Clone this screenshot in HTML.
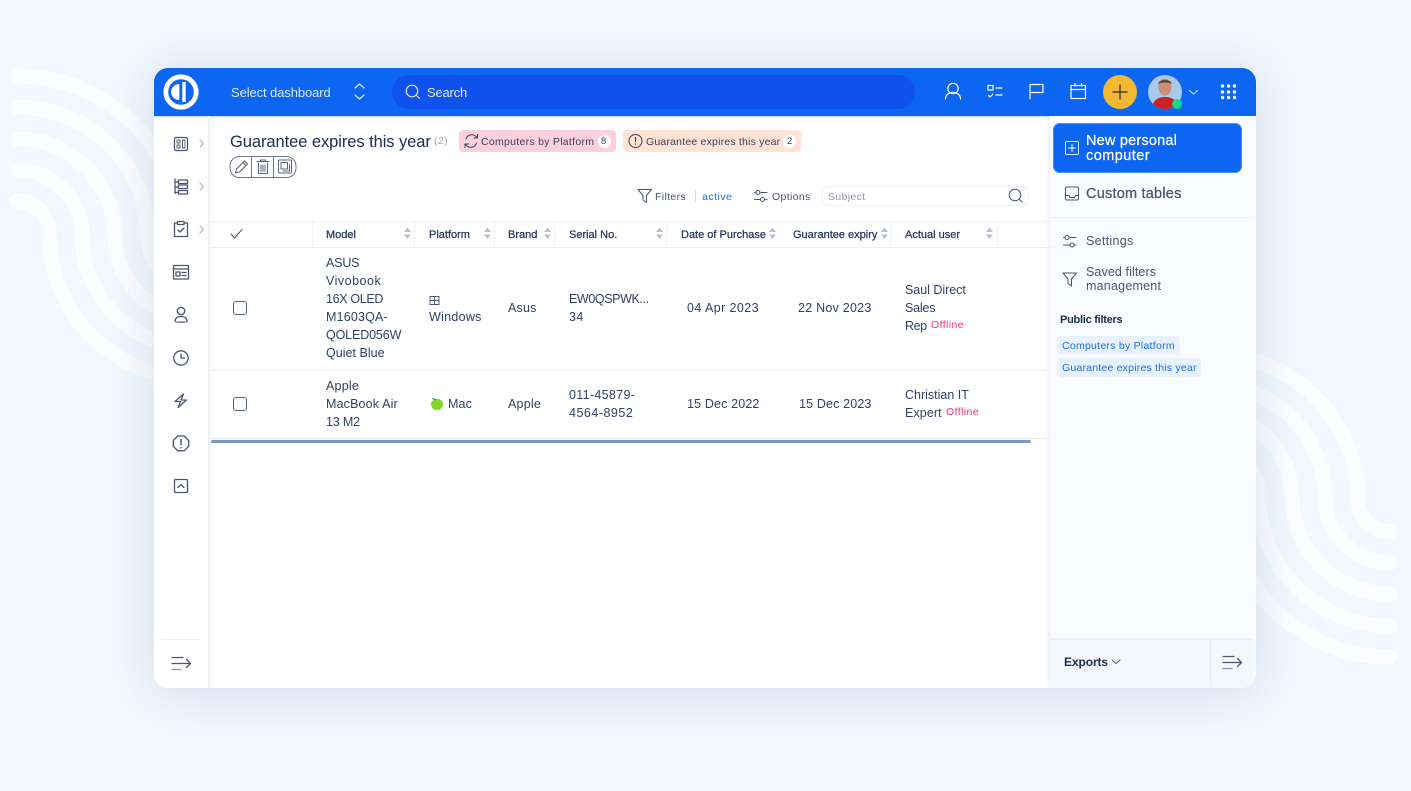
<!DOCTYPE html>
<html><head><meta charset="utf-8"><title>Guarantee expires this year</title>
<style>
html,body{margin:0;padding:0}
body{width:1411px;height:791px;overflow:hidden;position:relative;background:#f3f8fe;font-family:"Liberation Sans",sans-serif;color:#24365c}
svg{position:absolute;left:0;top:0}
.card{position:absolute;left:154px;top:68px;width:1102px;height:620px;background:#fff;border-radius:14px;box-shadow:0 4px 50px rgba(60,90,140,.18);overflow:hidden}
.head{position:absolute;left:0;top:0;width:1102px;height:48px;background:#0d66f1;box-shadow:0 1px 2px rgba(30,60,120,.25)}
.search{position:absolute;left:238px;top:7px;width:523px;height:34px;border-radius:17px;background:#1052ee}
.vline{position:absolute;left:54px;top:48px;width:2px;height:572px;background:#eef1f7;box-shadow:2px 0 5px rgba(60,80,120,.06)}
.rside{position:absolute;left:896px;top:48px;width:206px;height:572px;background:#fafbff;box-shadow:-1px 0 4px rgba(60,80,120,.12)}
.foot{position:absolute;left:896px;top:570px;width:203px;height:48px;background:#f4f8fe;border-top:2px solid #eef1f8;border-bottom:1px solid #e8ecf4}
.t{position:absolute;white-space:nowrap;line-height:18px;transform:translateY(-8px);font-size:12.5px;letter-spacing:.2px;color:#2a3c63;z-index:5}
.r{margin-top:-1px;color:#2f4166}
.h{font-size:11px;letter-spacing:0;color:#24365c;-webkit-text-stroke:.25px #24365c}
.s{font-size:12.5px;color:#4b5472;margin-top:-1px}
.tag{font-size:10.5px;color:#3a3f5c}
.box{position:absolute;z-index:2}
.off{font-size:10.5px;letter-spacing:.4px;color:#f5307a}
</style></head>
<body>
<svg width="1411" height="791" fill="none" stroke="#fff" stroke-opacity=".7" stroke-width="15" stroke-linecap="round">
<g>
<path d="M17 201A32 32 0 0 1 49 233A146 146 0 0 0 195 379"/>
<path d="M17 170A65 65 0 0 1 82 235A113 113 0 0 0 195 348"/>
<path d="M17 139A98 98 0 0 1 115 237A80 80 0 0 0 195 317"/>
<path d="M17 107A131 130 0 0 1 148 237A47 47 0 0 0 195 284"/>
<path d="M17 76A164 161 0 0 1 181 237"/>
</g>
<g>
<path d="M1390 532A32 32 0 0 1 1358 500A146 146 0 0 0 1212 354"/>
<path d="M1390 563A65 65 0 0 1 1325 498A113 113 0 0 0 1212 385"/>
<path d="M1390 594A98 98 0 0 1 1292 496A80 80 0 0 0 1212 416"/>
<path d="M1390 626A131 130 0 0 1 1259 496A47 47 0 0 0 1212 449"/>
<path d="M1390 657A164 161 0 0 1 1226 496"/>
</g>
</svg>

<div class="card">
  <div class="box" style="left:56px;top:153px;width:843px;height:1px;background:#eef1f8"></div>
  <div class="box" style="left:56px;top:179px;width:843px;height:1px;background:#eef1f8"></div>
  <div class="box" style="left:56px;top:301px;width:839px;height:2px;background:#f3f5fa"></div>
  <div class="box" style="left:56px;top:370px;width:839px;height:1px;background:#e6ebf3"></div>
  <div class="box" style="left:57px;top:372px;width:820px;height:3px;background:#7d99c2;border-radius:2px"></div>
  <div class="head"></div>
  <div class="search"></div>
  <div class="vline"></div>
  <div class="rside"></div>
  <div class="foot"></div>
  <div class="box" style="left:668px;top:118px;width:207px;height:20px;border:1px solid #eef2fb;border-radius:6px;box-sizing:border-box;background:#fff"></div>
  <div class="box" style="left:305px;top:62px;width:157px;height:22px;background:#ffcfdc;border-radius:4px"></div>
  <div class="box" style="left:469px;top:62px;width:178px;height:22px;background:#ffe4d6;border-radius:4px"></div>
  <div class="box" style="left:444px;top:67px;width:13px;height:13px;background:#fff;border-radius:50%"></div>
  <div class="box" style="left:629px;top:67px;width:13px;height:13px;background:#fff;border-radius:50%"></div>
  <div class="box" style="left:899px;top:55px;width:189px;height:50px;background:#0d66f1;border-radius:7px;box-shadow:0 0 0 1px #4d8ff5 inset"></div>
  <div class="box" style="left:896px;top:149px;width:203px;height:1px;background:#eef1f7"></div>
  <div class="box" style="left:903px;top:268px;width:123px;height:18px;background:#e8f2fe;border-radius:4px"></div>
  <div class="box" style="left:903px;top:290px;width:144px;height:19px;background:#e8f2fe;border-radius:4px"></div>
  <div class="box" style="left:7px;top:571px;width:40px;height:1px;background:#eef0f5"></div>
  <div class="box" style="left:1056px;top:572px;width:1px;height:46px;background:#e9edf5"></div>
</div>

<svg width="1411" height="791" fill="none" stroke="#4b5472" stroke-width="1.2" stroke-linecap="round" stroke-linejoin="round" style="z-index:4">
<!-- logo -->
<circle cx="181" cy="92" r="15.200" stroke="#fff" stroke-width="4.800"/>
<path d="M179 84.500a7.500 7.500 0 0 0 0 15z" fill="#fff" stroke="#fff" stroke-width=".8"/>
<path d="M184 82v20" stroke="#fff" stroke-width="3.400" stroke-linecap="butt"/>
<!-- dashboard chevrons -->
<path d="M355 88l4.500-4 4.500 4M355 95l4.500 4 4.500-4" stroke="#dbe8ff"/>
<!-- search icon -->
<circle cx="412" cy="91" r="5.800" stroke="#dbe8ff"/><path d="M416.500 95.500l3 3" stroke="#dbe8ff"/>
<!-- header right icons -->
<g stroke="#fff" stroke-width="1.200">
<circle cx="953" cy="88.500" r="5.200"/><path d="M945.500 99c0-4 3-6.500 7.500-6.500s7.500 2.500 7.500 6.500"/>
<rect x="988" y="85.500" width="5" height="4.500" stroke-linejoin="miter"/><path d="M996 88h6M996 95h6M988.500 95.500l1.500 1.500 3-3"/>
<path d="M1030 99V84.500h13v8h-13" stroke-linejoin="miter"/>
<rect x="1071" y="85.500" width="14.500" height="13" stroke-linejoin="miter"/><path d="M1071 89.500h14.500M1075 83.500v2.500M1081.500 83.500v2.500"/>
</g>
<circle cx="1120" cy="92" r="17" fill="#f2b834" stroke="none"/>
<path d="M1113 92h14M1120 85v14" stroke="#2e2a1a" stroke-width="1.200"/>
<!-- avatar -->
<clipPath id="av"><circle cx="1165" cy="92" r="17"/></clipPath>
<g clip-path="url(#av)" stroke="none">
<rect x="1148" y="75" width="34" height="34" fill="#a9c9ec"/>
<ellipse cx="1165" cy="87" rx="6.500" ry="8.500" fill="#c98f78"/>
<path d="M1158 84c1-5 12-6 14 0-4-2-10-2-14 0z" fill="#5d473c"/>
<path d="M1152 110c0-9 5-13 13-13s13 4 14 13z" fill="#cc1f26"/>
</g>
<circle cx="1177" cy="104" r="5" fill="#0fdc8a" stroke="none"/>
<path d="M1189.500 90.500l4 3.500 4-3.500" stroke="#dbe8ff" stroke-width="1"/>
<g fill="#fff" stroke="none">
<circle cx="1222.500" cy="86" r="1.700"/><circle cx="1228.500" cy="86" r="1.700"/><circle cx="1234.500" cy="86" r="1.700"/>
<circle cx="1222.500" cy="92" r="1.700"/><circle cx="1228.500" cy="92" r="1.700"/><circle cx="1234.500" cy="92" r="1.700"/>
<circle cx="1222.500" cy="97.500" r="1.700"/><circle cx="1228.500" cy="97.500" r="1.700"/><circle cx="1234.500" cy="97.500" r="1.700"/>
</g>
<!-- side icons -->
<g stroke-width="1.300">
<rect x="174.500" y="137.500" width="13" height="13" rx="1.500"/><rect x="177" y="140" width="3" height="3" stroke-width=".9"/><rect x="177" y="145" width="3" height="3" stroke-width=".9"/><rect x="182.500" y="140" width="2.500" height="8" stroke-width=".9"/>
<path d="M175 179v14.500M175 182h3M175 187h3M175 192.500h3"/><rect x="178.500" y="180" width="9" height="3.500"/><rect x="178.500" y="185" width="9" height="3.500"/><rect x="178.500" y="190.500" width="9" height="3.500"/>
<path d="M177.500 223h-3v13.500h13V223h-3M177.500 221.500h6.500v3h-6.500zM178 230l2 2 4-4"/>
<rect x="173.500" y="265.500" width="15" height="13.500"/><path d="M173.500 269h15M176 272h4v4h-4zM182 272.500h4M182 275.500h4"/>
<circle cx="181" cy="311" r="3.700"/><path d="M175 321.500c0-3 2-5 6-5s6 2 6 5c0 .8-12 .8-12 0z"/>
<circle cx="181" cy="358" r="7.200"/><path d="M181 354v4h3.500"/>
<path d="M183.500 394l-8.500 7.500h5.500l-2.500 6 8.500-7.500h-5.500z"/>
<path d="M177.800 436h6.400l4.500 4.500v5.800l-4.500 4.500h-6.400l-4.500-4.500v-5.800z"/><path d="M181 439.500v5M181 447.500v.2" stroke-width="1.500"/>
<rect x="174.500" y="479.500" width="13" height="13" rx="1.200"/><path d="M178 487.500l3-3 3 3"/>
<path d="M200 140l3.500 3.500-3.500 3.500M200 183l3.500 3.500-3.500 3.500M200 226l3.500 3.500-3.500 3.500" stroke="#a5aabd" stroke-width="1"/>
<path d="M172 657.500h11M172 663.500h18.500M186.500 659.500l4 4-4 4"/><path d="M172 669.500h9" stroke="#8c92a8"/>
<path d="M1223 656.500h11M1223 662.500h18.500M1237.500 658.500l4 4-4 4"/><path d="M1223 668.500h9" stroke="#8c92a8"/>
<path d="M1112 660l4 3.500 4-3.500" stroke-width="1"/>
</g>
<!-- edit group -->
<rect x="230" y="156.500" width="66" height="21" rx="9.500" stroke="#70748f" stroke-width="1"/>
<path d="M251.500 156.500v21M273.500 156.500v21" stroke="#70748f" stroke-width="1"/>
<path d="M235.500 173l1-4 8-8 3 3-8 8zM243 162.500l3 3" stroke="#5c6280" stroke-width="1"/>
<path d="M257 161.500h12M260.500 161.500v-1.500h5v1.500M258.500 163v10.500h9V163M261 165v6.500M263 165v6.500M265 165v6.500" stroke="#5c6280" stroke-width="1"/>
<rect x="278.500" y="160" width="13" height="13" rx="1" stroke="#5c6280" stroke-width="1"/><rect x="281" y="162.500" width="6.500" height="6.500" stroke="#5c6280" stroke-width="1"/><path d="M289.500 164.500v6.500h-6.500" stroke="#5c6280" stroke-width="1"/>
<!-- tag icons -->
<path d="M466 139a6 6 0 0 1 10-2.500l1.500 1.500M477.500 134.500v3.500h-3.500M476.500 143a6 6 0 0 1-10 2.500l-1.500-1.500M465 147.500v-3.500h3.500" stroke="#3a3f5c" stroke-width="1"/>
<circle cx="635.500" cy="141" r="6.500" stroke="#3a3f5c" stroke-width="1"/><path d="M635.500 137.500v4M635.500 144v.2" stroke="#3a3f5c" stroke-width="1.200"/>
<!-- filter row -->
<path d="M638 189.500h13.500l-5 6v7l-3.500-2.500v-4.500z" stroke-width="1"/>
<path d="M695.500 190v12" stroke="#d5dce8" stroke-width="1"/>
<circle cx="758" cy="192.500" r="2" stroke-width="1"/><path d="M754.500 192.500h1.500M761 192.500h6M754.500 199.500h6M765 199.500h2" stroke-width="1"/><circle cx="762.500" cy="199.500" r="2" stroke-width="1"/>
<circle cx="1015" cy="195" r="5.800" stroke-width="1"/><path d="M1019.500 199.500l2.500 2.500" stroke-width="1"/>
<!-- table -->
<path d="M231 234l3.500 4 7.500-8.500" stroke-width="1"/>
<path d="M312.500 221v26M414.500 221v26M494.500 221v26M554.500 221v26M666.500 221v26M890.500 221v26M997.500 221v26" stroke="#eef1f8" stroke-width="1"/>
<g fill="#b6bdcd" stroke="none">
<path d="M404 232l3.500-4.500 3.500 4.500zM404 234.500l3.500 4.500 3.500-4.500z"/>
<path d="M484 232l3.500-4.500 3.500 4.500zM484 234.500l3.500 4.500 3.500-4.500z"/>
<path d="M544 232l3.500-4.500 3.500 4.500zM544 234.500l3.500 4.500 3.500-4.500z"/>
<path d="M656 232l3.500-4.500 3.500 4.500zM656 234.500l3.500 4.500 3.500-4.500z"/>
<path d="M769 232l3.500-4.500 3.500 4.500zM769 234.500l3.500 4.500 3.500-4.500z"/>
<path d="M881 232l3.500-4.500 3.500 4.500zM881 234.500l3.500 4.500 3.500-4.500z"/>
<path d="M986 232l3.500-4.500 3.500 4.500zM986 234.500l3.500 4.500 3.500-4.500z"/>
</g>
<rect x="233.500" y="301.500" width="13" height="13" rx="2.500" stroke="#4a5f85" stroke-width="1"/>
<rect x="233.500" y="397.500" width="13" height="13" rx="2.500" stroke="#4a5f85" stroke-width="1"/>
<path d="M430 296.500h9v8h-9zM434.500 296.500v8M430 300.500h9" stroke="#46567a" stroke-width=".9" stroke-linejoin="miter"/>
<ellipse cx="437" cy="404.500" rx="6" ry="5.600" fill="#86d42c" stroke="none"/><path d="M432.500 398.500l3 1.200" stroke="#2fa84a" stroke-width="1.200"/>
<!-- right icons -->
<rect x="1065.500" y="141.500" width="13" height="13" rx="1.500" stroke="#dbe8ff" stroke-width="1"/><path d="M1072 144.500v7M1068.500 148h7" stroke="#fff" stroke-width="1"/>
<rect x="1065.500" y="187" width="13" height="13" rx="1.500" stroke-width="1"/><path d="M1065.500 195.500h3.500l1 2h4.500l1-2h3" stroke-width="1"/>
<circle cx="1067" cy="237.500" r="2" stroke-width="1"/><path d="M1063.500 237.500h1.500M1070 237.500h6M1063.500 245h6M1074 245h2" stroke-width="1"/><circle cx="1072" cy="245" r="2" stroke-width="1"/>
<path d="M1063 273h13.500l-5 6v7l-3.500-2.500v-4.500z" stroke-width="1"/>
</svg>

<span class="t" style="left:231px;top:92px;color:#dce9ff;font-size:13px;letter-spacing:-.1px">Select dashboard</span>
<span class="t" style="left:427px;top:92px;color:#dce9ff;font-size:13px;letter-spacing:-.2px">Search</span>
<span class="t" style="left:230px;top:141px;font-size:16.5px;letter-spacing:-.07px;color:#1c2d52">Guarantee expires this year</span>
<span class="t" style="left:434px;top:140px;font-size:10.5px;letter-spacing:.42px;color:#a3a9ba">(2)</span>
<span class="t tag" style="left:481px;top:141px;letter-spacing:.28px">Computers by Platform</span>
<span class="t tag" style="left:601px;top:141px;font-size:9.5px">8</span>
<span class="t tag" style="left:646px;top:141px;letter-spacing:.2px">Guarantee expires this year</span>
<span class="t tag" style="left:787px;top:141px;font-size:9.5px">2</span>
<span class="t" style="left:655px;top:196px;font-size:10.5px;letter-spacing:.35px;color:#4b5472">Filters</span>
<span class="t" style="left:702px;top:196px;font-size:10.5px;letter-spacing:.5px;color:#1a6ef0">active</span>
<span class="t" style="left:772px;top:196px;font-size:10.5px;letter-spacing:.35px;color:#4b5472">Options</span>
<span class="t" style="left:828px;top:196px;font-size:10.5px;letter-spacing:.35px;color:#9096a8">Subject</span>

<span class="t h" style="left:326px;top:234px">Model</span>
<span class="t h" style="left:429px;top:234px">Platform</span>
<span class="t h" style="left:508px;top:234px">Brand</span>
<span class="t h" style="left:569px;top:234px">Serial No.</span>
<span class="t h" style="left:681px;top:234px">Date of Purchase</span>
<span class="t h" style="left:793px;top:234px">Guarantee expiry</span>
<span class="t h" style="left:905px;top:234px">Actual user</span>

<span class="t r" style="left:326px;top:263px;letter-spacing:-.18px">ASUS</span>
<span class="t r" style="left:326px;top:281px;letter-spacing:.5px">Vivobook</span>
<span class="t r" style="left:326px;top:299px;letter-spacing:-.33px">16X OLED</span>
<span class="t r" style="left:326px;top:317px;letter-spacing:.17px">M1603QA-</span>
<span class="t r" style="left:326px;top:335px;letter-spacing:-.13px">QOLED056W</span>
<span class="t r" style="left:326px;top:353px;letter-spacing:.02px">Quiet Blue</span>
<span class="t r" style="left:429px;top:317px;letter-spacing:.28px">Windows</span>
<span class="t r" style="left:508px;top:308px;letter-spacing:.18px">Asus</span>
<span class="t r" style="left:569px;top:299px;letter-spacing:-.4px">EW0QSPWK...</span>
<span class="t r" style="left:569px;top:317px;letter-spacing:.42px">34</span>
<span class="t r" style="left:687px;top:308px;letter-spacing:.42px">04 Apr 2023</span>
<span class="t r" style="left:798px;top:308px;letter-spacing:.24px">22 Nov 2023</span>
<span class="t r" style="left:905px;top:290px;letter-spacing:-.03px">Saul Direct</span>
<span class="t r" style="left:905px;top:308px;letter-spacing:-.2px">Sales</span>
<span class="t r" style="left:905px;top:326px;letter-spacing:-.4px">Rep</span>
<span class="t off" style="left:931px;top:324px">Offline</span>

<span class="t r" style="left:326px;top:386px;letter-spacing:.22px">Apple</span>
<span class="t r" style="left:326px;top:404px;letter-spacing:.15px">MacBook Air</span>
<span class="t r" style="left:326px;top:422px;letter-spacing:-.18px">13 M2</span>
<span class="t r" style="left:448px;top:404px;letter-spacing:.1px">Mac</span>
<span class="t r" style="left:508px;top:404px;letter-spacing:.22px">Apple</span>
<span class="t r" style="left:569px;top:395px;letter-spacing:.32px">011-45879-</span>
<span class="t r" style="left:569px;top:413px;letter-spacing:.5px">4564-8952</span>
<span class="t r" style="left:687px;top:404px;letter-spacing:.15px">15 Dec 2022</span>
<span class="t r" style="left:799px;top:404px;letter-spacing:.15px">15 Dec 2023</span>
<span class="t r" style="left:905px;top:395px;letter-spacing:0">Christian IT</span>
<span class="t r" style="left:905px;top:413px;letter-spacing:.1px">Expert</span>
<span class="t off" style="left:946px;top:411px">Offline</span>

<span class="t" style="left:1086px;top:140px;font-size:14.5px;letter-spacing:.2px;color:#fff;-webkit-text-stroke:.25px #fff">New personal</span>
<span class="t" style="left:1086px;top:155px;font-size:14.5px;letter-spacing:.45px;color:#fff;-webkit-text-stroke:.25px #fff">computer</span>
<span class="t" style="left:1086px;top:193px;font-size:14.5px;letter-spacing:.22px;color:#4b5472;-webkit-text-stroke:.25px #4b5472">Custom tables</span>
<span class="t s" style="left:1086px;top:241px;letter-spacing:.3px">Settings</span>
<span class="t s" style="left:1086px;top:272px;letter-spacing:.1px">Saved filters</span>
<span class="t s" style="left:1086px;top:286px;letter-spacing:.22px">management</span>
<span class="t" style="left:1060px;top:319px;font-size:11px;font-weight:bold;letter-spacing:-.26px;color:#1c2d52">Public filters</span>
<span class="t" style="left:1062px;top:345px;font-size:10.5px;letter-spacing:.26px;color:#1a6ef0">Computers by Platform</span>
<span class="t" style="left:1062px;top:367px;font-size:10.5px;letter-spacing:.21px;color:#1a6ef0">Guarantee expires this year</span>
<span class="t" style="left:1064px;top:661px;font-size:12px;font-weight:bold;letter-spacing:-.1px;color:#1c2d52">Exports</span>
</body></html>
